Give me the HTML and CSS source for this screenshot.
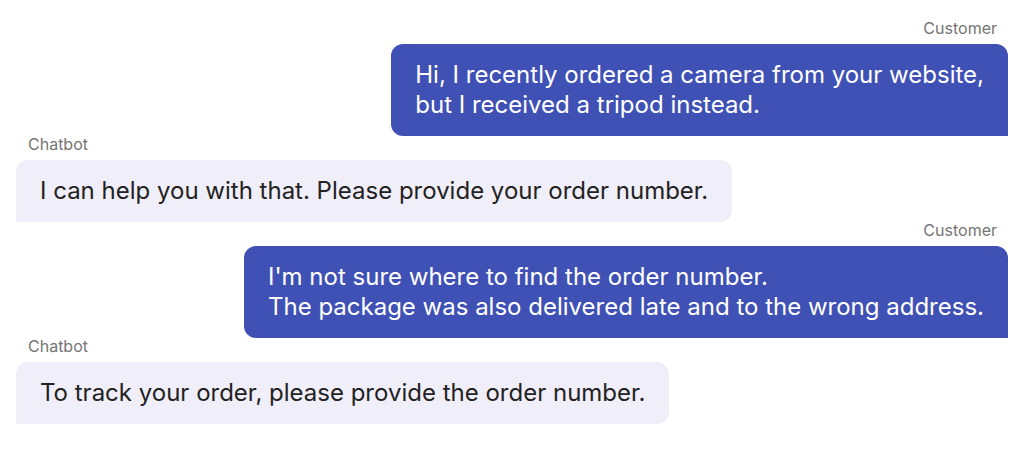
FILE: index.html
```html
<!DOCTYPE html>
<html lang="en">
<head>
<meta charset="utf-8">
<title>Chat</title>
<link rel="stylesheet" href="styles.css">
</head>
<body>
<div class="chat">
  <div class="msg msg-customer">
    <div class="label">Customer</div>
    <div class="bubble">Hi, I recently ordered a camera from your website,<br>but I received a tripod instead.</div>
  </div>
  <div class="msg msg-bot">
    <div class="label">Chatbot</div>
    <div class="bubble">I can help you with that. Please provide your order number.</div>
  </div>
  <div class="msg msg-customer">
    <div class="label">Customer</div>
    <div class="bubble">I'm not sure where to find the order number.<br>The package was also delivered late and to the wrong address.</div>
  </div>
  <div class="msg msg-bot">
    <div class="label">Chatbot</div>
    <div class="bubble">To track your order, please provide the order number.</div>
  </div>
</div>
</body>
</html>
```

FILE: styles.css
```css
html, body {
  margin: 0;
  padding: 0;
  background: #ffffff;
}
body {
  font-family: Inter, "Noto Sans", sans-serif;
}
.chat {
  display: flex;
  flex-direction: column;
  padding: 20px 16px 0 16px;
}
.msg {
  display: flex;
  flex-direction: column;
}
.msg-customer {
  align-items: flex-end;
}
.msg-bot {
  align-items: flex-start;
}
.label {
  font-size: 16px;
  line-height: 16px;
  color: #757575;
  padding: 0 11px 0 12px;
  margin-bottom: 8px;
}
.bubble {
  font-size: 24px;
  line-height: 30px;
  padding: 16px 24px;
  border-radius: 12px;
}
.msg-customer .bubble {
  background: #3f51b5;
  color: #ffffff;
  border-bottom-right-radius: 0;
}
.msg-bot .bubble {
  background: #f0eef9;
  color: #222222;
  border-bottom-left-radius: 0;
}
```
